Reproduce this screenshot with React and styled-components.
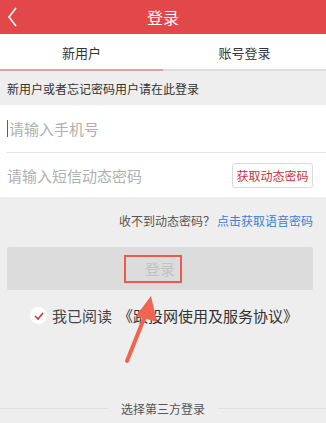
import React from 'react';
import styled, { createGlobalStyle } from 'styled-components';

const GlobalStyle = createGlobalStyle`
  html, body {
    margin: 0;
    padding: 0;
    background: #eeeeee;
  }
  body {
    font-family: 'Noto Sans CJK SC', 'Liberation Sans', sans-serif;
  }
`

const Page = styled.div`
  position: relative;
  width: 326px;
  height: 423px;
  overflow: hidden;
  background: #eeeeee;
`

const Header = styled.div`
  height: 34px;
  background: #e2474a;
  display: flex;
  align-items: center;
  justify-content: center;
  position: relative;
  color: #fff;
  font-size: 16px;
`

const BackButton = styled.svg`
  position: absolute;
  left: 6px;
  top: 6px;
`

const Tabs = styled.div`
  display: flex;
  background: #fff;
  height: 37px;
`

const Tab = styled.div`
  flex: 1;
  display: flex;
  align-items: center;
  justify-content: center;
  font-size: 13px;
  color: #333;
  padding-top: 2px;
  box-sizing: border-box;
  border-bottom: 2px solid ${p => (p.$active ? '#dca3a3' : '#dcdcdc')};
`

const Notice = styled.div`
  height: 34px;
  padding-left: 7px;
  display: flex;
  align-items: center;
  font-size: 12px;
  color: #333;
`

const Form = styled.div`
  background: #fff;
`

const Row = styled.div`
  height: ${p => p.$h}px;
  margin-left: 7px;
  padding-right: 13px;
  display: flex;
  align-items: center;
  justify-content: space-between;
  border-bottom: ${p => (p.$line ? '1px solid #e4e4e4' : 'none')};
`

const Placeholder = styled.span`
  font-size: 15px;
  color: #b0b0b0;
  display: flex;
  align-items: center;
`

const Caret = styled.i`
  display: inline-block;
  width: 1px;
  height: 17px;
  background: #4a5fa0;
  margin-right: 1px;
`

const CodeButton = styled.div`
  width: 81px;
  height: 25px;
  box-sizing: border-box;
  border: 1px solid #dadada;
  border-radius: 3px;
  display: flex;
  align-items: center;
  justify-content: center;
  font-size: 12px;
  color: #c7353b;
`

const VoiceTip = styled.div`
  display: flex;
  justify-content: flex-end;
  padding: 15px 13px 0 0;
  height: 35px;
  box-sizing: border-box;
  font-size: 12px;
  color: #555;
`

const Link = styled.span`
  color: #3b82d0;
  margin-left: 2px;
`

const LoginButton = styled.div`
  margin: 15px 13px 0 7px;
  height: 43px;
  background: #dcdcdc;
  border-radius: 2px;
  display: flex;
  align-items: center;
  justify-content: center;
  font-size: 15px;
  color: #c2c2c2;
`

const Agreement = styled.div`
  display: flex;
  align-items: center;
  padding-left: 30px;
  margin-top: 15px;
  font-size: 15px;
  color: #444;
`

const Check = styled.div`
  width: 17px;
  height: 17px;
  border-radius: 50%;
  background: #fff;
  display: flex;
  align-items: center;
  justify-content: center;
  margin-right: 5px;
`

const Title = styled.span`
  margin-left: 6px;
  color: #333;
`

const ThirdParty = styled.div`
  position: absolute;
  left: 0;
  right: 0;
  top: 400px;
  display: flex;
  align-items: center;
  font-size: 12px;
  color: #555;
  &::before, &::after {
    content: '';
    flex: 1;
    height: 1px;
    background: #dedede;
  }
  &::before { margin-right: 13px; }
  &::after { margin-left: 13px; }
`

const Highlight = styled.div`
  position: absolute;
  left: 124px;
  top: 255px;
  width: 58px;
  height: 28px;
  box-sizing: border-box;
  border: 2px solid #ec5a4c;
`

const Arrow = styled.svg`
  position: absolute;
  left: 0;
  top: 0;
  pointer-events: none;
`

const App = () => {
  return (
    <Page>
      <GlobalStyle />
      <Header>
        <BackButton width="14" height="22" viewBox="0 0 14 22">
          <path d="M10 2 L3 11 L10 20" fill="none" stroke="#fff" strokeWidth="1.6" />
        </BackButton>
        登录
      </Header>
      <Tabs>
        <Tab $active>新用户</Tab>
        <Tab>账号登录</Tab>
      </Tabs>
      <Notice>新用户或者忘记密码用户请在此登录</Notice>
      <Form>
        <Row $h={47} $line>
          <Placeholder><Caret />请输入手机号</Placeholder>
        </Row>
        <Row $h={44}>
          <Placeholder>请输入短信动态密码</Placeholder>
          <CodeButton>获取动态密码</CodeButton>
        </Row>
      </Form>
      <VoiceTip>
        收不到动态密码？<Link>点击获取语音密码</Link>
      </VoiceTip>
      <LoginButton>登录</LoginButton>
      <Agreement>
        <Check>
          <svg width="10" height="8" viewBox="0 0 10 8">
            <path d="M1 4 L4 7 L9 1" fill="none" stroke="#c7353b" strokeWidth="1.6" />
          </svg>
        </Check>
        我已阅读<Title>《跟投网使用及服务协议》</Title>
      </Agreement>
      <ThirdParty>选择第三方登录</ThirdParty>
      <Highlight />
      <Arrow width="326" height="423" viewBox="0 0 326 423">
        <line x1="127" y1="361" x2="145" y2="316" stroke="#f06550" strokeWidth="4" strokeLinecap="round" />
        <polygon points="151,296 157,322 136,316" fill="#f06550" />
      </Arrow>
    </Page>
  );
}

export default App;
